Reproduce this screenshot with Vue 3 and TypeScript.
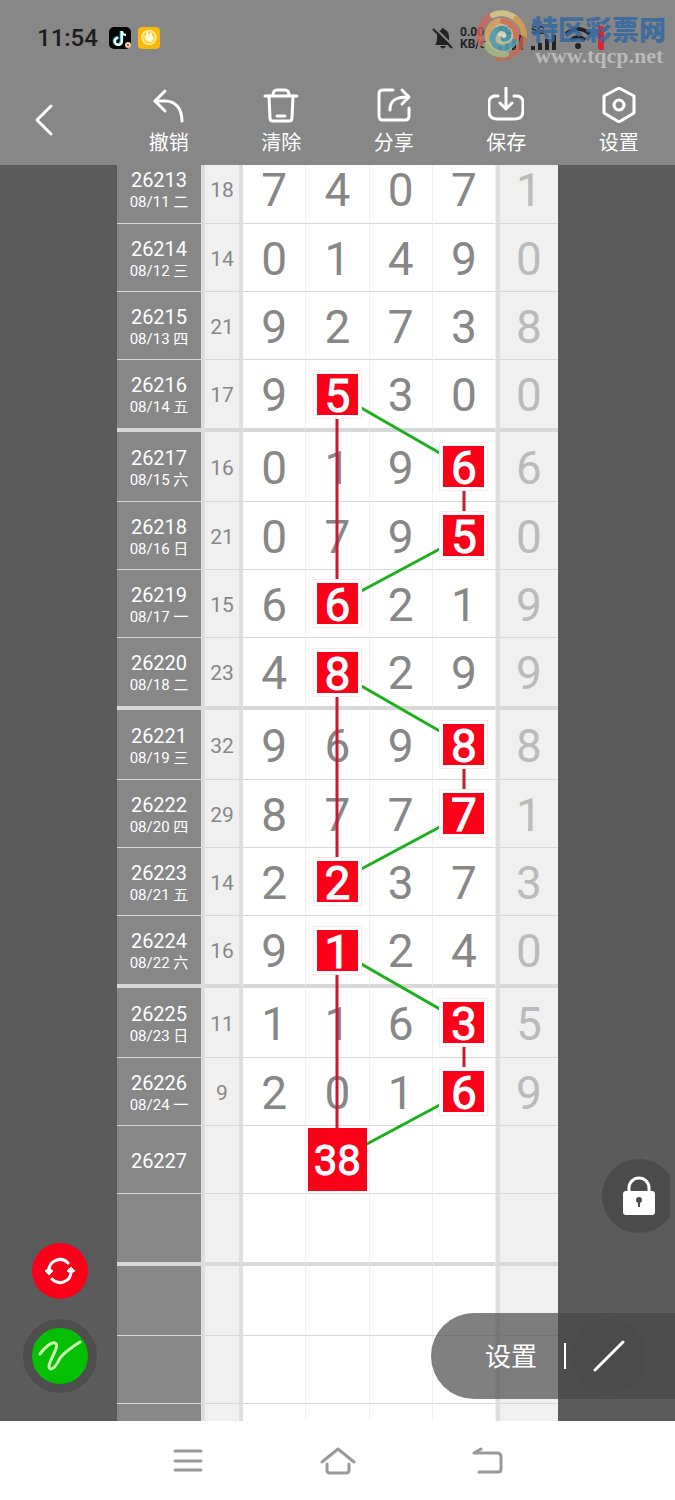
<script setup lang="ts">
interface Row {
  issue: string
  date: string
  sum: string
  digits: string[]
  tail: string
}

const BLOCK_HEIGHT = 278
const ROWS_PER_BLOCK = 4
const ROW_CENTERS = [35, 104, 172, 240]
const TOTAL_ROWS = 20
const CHART_HEIGHT = (TOTAL_ROWS / ROWS_PER_BLOCK) * BLOCK_HEIGHT

const source: [string, string, string, string, string][] = [
  ['26213', '08/11 二', '18', '7407', '1'],
  ['26214', '08/12 三', '14', '0149', '0'],
  ['26215', '08/13 四', '21', '9273', '8'],
  ['26216', '08/14 五', '17', '9530', '0'],
  ['26217', '08/15 六', '16', '0196', '6'],
  ['26218', '08/16 日', '21', '0795', '0'],
  ['26219', '08/17 一', '15', '6621', '9'],
  ['26220', '08/18 二', '23', '4829', '9'],
  ['26221', '08/19 三', '32', '9698', '8'],
  ['26222', '08/20 四', '29', '8777', '1'],
  ['26223', '08/21 五', '14', '2237', '3'],
  ['26224', '08/22 六', '16', '9124', '0'],
  ['26225', '08/23 日', '11', '1163', '5'],
  ['26226', '08/24 一', '9', '2016', '9'],
  ['26227', '', '', '', ''],
]

const rows: Row[] = Array.from({ length: TOTAL_ROWS }, (_, i) => {
  const [issue, date, sum, digits, tail] = source[i] ?? ['', '', '', '', '']
  return { issue, date, sum, digits: [0, 1, 2, 3].map((n) => digits[n] ?? ''), tail }
})
rows[14].digits[1] = '38'

const marked = new Set(['3-1', '4-3', '5-3', '6-1', '7-1', '8-3', '9-3', '10-1', '11-1', '12-3', '13-3'])
const isMarked = (r: number, c: number) => marked.has(`${r}-${c}`)

const columnX: Record<number, number> = { 1: 220, 3: 347 }
const rowY = (r: number) =>
  Math.floor(r / ROWS_PER_BLOCK) * BLOCK_HEIGHT + ROW_CENTERS[r % ROWS_PER_BLOCK]

const segments = [3, 7, 11].flatMap((r) => [
  { from: [r, 1], to: [r + 3, 1], kind: 'red' },
  { from: [r + 1, 3], to: [r + 2, 3], kind: 'red' },
  { from: [r, 1], to: [r + 1, 3], kind: 'green' },
  { from: [r + 2, 3], to: [r + 3, 1], kind: 'green' },
]).map((s) => ({
  kind: s.kind,
  x1: columnX[s.from[1]],
  y1: rowY(s.from[0]),
  x2: columnX[s.to[1]],
  y2: rowY(s.to[0]),
}))

const tools = [
  { label: '撤销', paths: ['M14 4 L4 14 L14 24', 'M4 14 H14 C25 14 31 22 31 34'] },
  { label: '清除', paths: ['M2 9 H34', 'M10 8 C10 4 12 3 14 3 H22 C24 3 26 4 26 8', 'M6 9 L7 31 Q7 34 10 34 H26 Q29 34 29 31 L30 9', 'M14 29 H22'] },
  { label: '分享', paths: ['M17 3 H7 Q3 3 3 7 V29 Q3 33 7 33 H29 Q33 33 33 29 V21', 'M14 23 C14 14 19 10 32 10', 'M26 3 L33 10 L26 17'] },
  { label: '保存', paths: ['M10 9 H7 Q1 10 1 15 V24 Q1 32 9 32 H27 Q35 32 35 24 V15 Q35 10 29 9 H26', 'M18 1 V21', 'M12 16 L18 22 L24 16'] },
  { label: '设置', paths: ['M18 1 L33 9 V26 L18 35 L3 26 V9 Z', 'M23 18 A5 5 0 1 1 13 18 A5 5 0 1 1 23 18'] },
]
</script>

<template>
  <div class="screen">
    <header class="top">
      <div class="status">
        <span class="time">11:54</span>
        <svg class="app-icon" viewBox="0 0 22 22" aria-hidden="true">
          <rect width="22" height="22" rx="5" fill="#050505" />
          <path d="M12 4 V14 A3.500 3.500 0 1 1 9 10.500" fill="none" stroke="#35e0e0" stroke-width="2.500" />
          <path d="M13 4 V14 A3.500 3.500 0 1 1 9.500 11 M13 5 Q14 8 17 8" fill="none" stroke="#fff" stroke-width="2.200" />
          <circle cx="19" cy="18" r="3" fill="#f4d3a0" /><circle cx="19" cy="18" r="1" fill="#a33" />
        </svg>
        <svg class="app-icon" viewBox="0 0 22 22" aria-hidden="true">
          <rect width="22" height="22" rx="4" fill="#f9b90c" />
          <circle cx="11" cy="10.500" r="7" fill="#fbd42b" stroke="#fff0a0" stroke-width="1.500" />
          <path d="M6 9 L8 9 L8 5 L10 5 L11 8 L13 5 L14 6 L14 9 L16 10 L15 13 Q12 17 8 13 Z" fill="#fff8e0" />
        </svg>
        <div class="signals">
          <svg class="bell" viewBox="0 0 22 24" aria-hidden="true">
            <path d="M3 19 Q5 17 5 11 Q5 5 9 4 Q11 0 13 4 Q17 5 17 11 Q17 17 19 19 Z M8 20 H14 Q11 25 8 20 Z" fill="#222" />
            <path d="M3 2 L22 21" stroke="#878787" stroke-width="2" /><path d="M1 3 L20 22" stroke="#222" stroke-width="2" />
          </svg>
          <span class="speed">0.00<br />KB/s</span>
          <span class="cell-net">5G<svg viewBox="0 0 26 15" aria-hidden="true"><path d="M2 15 V11 M9 15 V8 M16 15 V4 M23 15 V0" /></svg></span>
          <span class="cell-net">5G<svg viewBox="0 0 26 15" aria-hidden="true"><path d="M2 15 V11 M9 15 V8 M16 15 V4 M23 15 V0" /></svg></span>
          <svg class="wifi" viewBox="0 0 28 24" aria-hidden="true">
            <path d="M2 8 Q14 -2 26 8 M7 14 Q14 8 21 14" fill="none" stroke="#222" stroke-width="4" /><circle cx="14" cy="20" r="3" fill="#222" />
          </svg>
          <i class="battery"></i>
        </div>
        <div class="watermark">
          <svg viewBox="0 0 52 52" aria-hidden="true">
            <circle cx="26" cy="26" r="17" fill="#d9cf9c" opacity=".85" />
            <g fill="none" stroke-width="6" stroke-linecap="round" opacity=".9">
              <path d="M5 34 A23 23 0 0 1 16 6" stroke="#d76458" />
              <path d="M17 6 A22 22 0 0 1 43 13" stroke="#e4d28a" />
              <path d="M40 10 A22 22 0 0 1 48 27" stroke="#e5a34a" />
              <path d="M47 30 A23 23 0 0 1 22 49" stroke="#cc6b50" />
              <path d="M10 36 A18 18 0 0 0 30 45" stroke="#a9bf82" />
              <path d="M12 30 A16 16 0 0 1 23 12" stroke="#dfa258" />
              <path d="M27 12 A15 15 0 0 1 40 30" stroke="#dc6a4e" />
              <path d="M38 33 Q30 43 19 36 Q13 28 21 21" stroke="#4b9fb8" />
              <path d="M21 21 Q29 16 33 25 Q33 31 27 30" stroke="#3797b5" stroke-width="5" />
              <path d="M24 25 Q27 23 28 27" stroke="#e8eee8" stroke-width="4" />
            </g>
          </svg>
          <div class="mark-text"><strong>特区彩票网</strong><span>www.tqcp.net</span></div>
        </div>
      </div>
      <nav class="toolbar">
        <button class="tool back" type="button" aria-label="返回">
          <svg viewBox="0 0 20 34" aria-hidden="true"><path d="M17 3 L3 17 L17 31" /></svg>
        </button>
        <button v-for="tool in tools" :key="tool.label" class="tool" type="button">
          <svg viewBox="0 0 36 36" aria-hidden="true"><path v-for="d in tool.paths" :key="d" :d="d" /></svg>
          <span>{{ tool.label }}</span>
        </button>
      </nav>
    </header>

    <main class="stage">
      <div class="chart">
        <table>
          <colgroup><col class="c-issue" /><col class="c-sum" /><col span="4" /><col class="c-tail" /></colgroup>
          <tbody>
            <tr v-for="(row, r) in rows" :key="r" :class="{ first: r % 4 === 0, last: r % 4 === 3 }">
              <th scope="row" class="issue">
                <span class="no">{{ row.issue }}</span><span v-if="row.date" class="date">{{ row.date }}</span>
              </th>
              <td class="sum">{{ row.sum }}</td>
              <td v-for="(d, c) in row.digits" :key="c" class="digit">
                <span v-if="d === '38'" class="pick">{{ d }}</span>
                <span v-else-if="isMarked(r, c)" class="hit">{{ d }}</span>
                <span v-else class="plain">{{ d }}</span>
              </td>
              <td class="tail"><span class="plain">{{ row.tail }}</span></td>
            </tr>
          </tbody>
        </table>
        <svg class="trend" :viewBox="`0 0 441 ${CHART_HEIGHT}`" preserveAspectRatio="none" aria-hidden="true">
          <line v-for="(s, i) in segments" :key="i" :class="s.kind" :x1="s.x1" :y1="s.y1" :x2="s.x2" :y2="s.y2" />
        </svg>
      </div>

      <div class="left-actions">
        <button class="refresh" type="button" aria-label="刷新">
          <svg viewBox="0 0 32 28" aria-hidden="true">
            <path d="M5 14 A11 11 0 0 1 24 6 M27 14 A11 11 0 0 1 8 22" fill="none" stroke="#fff" stroke-width="3" stroke-linecap="round" />
            <path d="M1 14 L5 11 L9 14 L5 18 Z M23 14 L27 10 L31 14 L27 16 Z" fill="#fff" stroke="#fff" stroke-width="1" stroke-linejoin="round" />
          </svg>
        </button>
        <button class="draw" type="button" aria-label="画线">
          <svg viewBox="0 0 44 32" aria-hidden="true">
            <path d="M2 14 C8 6 14 2 17 3 C23 5 10 22 11 27 C12 31 17 29 22 18 C26 13 34 7 42 2" />
          </svg>
        </button>
      </div>

      <button class="lock" type="button" aria-label="锁定">
        <svg viewBox="0 0 34 40" aria-hidden="true">
          <path d="M7 17 V12 A10 10 0 0 1 27 12 V17" fill="none" stroke="#fff" stroke-width="3" />
          <rect x="1" y="15" width="32" height="24" rx="3" fill="#fff" />
          <path d="M17 25 V31" stroke="#4b4b4b" stroke-width="2" /><circle cx="17" cy="24" r="3" fill="#4b4b4b" />
        </svg>
      </button>

      <div class="pill">
        <button type="button" class="pill-set">设置</button>
        <i class="divider"></i>
        <button type="button" class="pill-line" aria-label="直线">
          <svg viewBox="0 0 32 32" aria-hidden="true"><path d="M2 30 L30 2" /></svg>
        </button>
      </div>
    </main>

    <nav class="system">
      <button type="button" aria-label="最近任务"><svg viewBox="0 0 36 28"><path d="M5 4 H31 M5 14 H31 M5 23 H31" /></svg></button>
      <button type="button" aria-label="主页"><svg viewBox="0 0 36 28"><path d="M2 15 L18 2 L34 15 M7 17 V23 Q7 26 10 26 H26 Q29 26 29 23 V17" /></svg></button>
      <button type="button" aria-label="后退"><svg viewBox="0 0 36 28"><path d="M11 2 L4 6 H27 Q31 6 31 10 V22 Q31 25 28 25 H9" /></svg></button>
    </nav>
  </div>
</template>

<style>
body {
  background: #fff;
}
</style>

<style scoped>
.screen {
  display: flex;
  flex-direction: column;
  height: 100vh;
  overflow: hidden;
  font-family: Roboto, "Noto Sans CJK SC", sans-serif;
}
button {
  padding: 0;
  border: 0;
  background: none;
  color: #fff;
  font-family: inherit;
}
svg {
  display: block;
}
.top {
  flex: none;
  background: #878787;
}
.status {
  position: relative;
  display: flex;
  align-items: center;
  height: 76px;
  padding: 0 71px 0 37px;
}
.time {
  margin-right: 11px;
  color: #1c1c1c;
  font-size: 24px;
  font-weight: 500;
}
.app-icon {
  width: 22px;
  height: 22px;
  margin-right: 7px;
}
.signals {
  display: flex;
  align-items: center;
  gap: 6px;
  margin-left: auto;
  color: #222;
}
.bell {
  width: 22px;
  height: 24px;
}
.speed {
  width: 32px;
  font-size: 12px;
  font-weight: 700;
  line-height: 12px;
}
.cell-net {
  width: 27px;
  font-size: 11px;
  font-weight: 700;
  line-height: 9px;
}
.cell-net svg {
  width: 26px;
  height: 15px;
  stroke: #222;
  stroke-width: 4;
}
.wifi {
  width: 28px;
  height: 24px;
}
.battery {
  width: 6px;
  height: 24px;
  border-radius: 2px;
  background: #d92632;
}
.watermark {
  position: absolute;
  top: 9px;
  right: 9px;
  display: flex;
  align-items: flex-start;
  opacity: 0.85;
}
.watermark svg {
  width: 52px;
  height: 52px;
  margin-right: 3px;
}
.mark-text {
  display: flex;
  flex-direction: column;
  padding-top: 7px;
}
.mark-text strong {
  color: #34699f;
  font-size: 27px;
  font-weight: 900;
  line-height: 30px;
}
.mark-text span {
  padding-left: 4px;
  color: #c4c4c4;
  font: bold 22px/20px "Liberation Serif", serif;
}
.toolbar {
  display: grid;
  grid-template-columns: repeat(6, 1fr);
  height: 89px;
}
.tool {
  display: flex;
  flex-direction: column;
  align-items: center;
  padding-top: 11px;
  font-size: 20px;
  line-height: 26px;
}
.tool svg {
  width: 36px;
  height: 36px;
  margin-bottom: 7px;
  fill: none;
  stroke: #fff;
  stroke-width: 3;
  stroke-linecap: round;
  stroke-linejoin: round;
}
.tool.back {
  align-items: flex-start;
  padding: 27px 0 0 34px;
}
.tool.back svg {
  width: 20px;
  height: 34px;
}
.stage {
  position: relative;
  flex: 1;
  min-height: 0;
  padding: 0 117px;
  overflow: hidden;
  background: #5b5b5b;
}
.chart {
  position: relative;
  margin-top: -11px;
}
table {
  width: 100%;
  border-spacing: 0;
  table-layout: fixed;
}
.c-issue {
  width: 88px;
}
.c-sum {
  width: 38px;
}
.c-tail {
  width: 62px;
}
tr {
  height: 68px;
}
tr.first {
  height: 70px;
}
tr.last {
  height: 72px;
}
th,
td {
  box-sizing: border-box;
  padding: 0;
  border-bottom: 1px solid #d8d8d8;
  text-align: center;
  vertical-align: middle;
}
tr.last > * {
  border-bottom-width: 4px;
}
.issue {
  padding-top: 2px;
  border-right: 4px solid #dedede;
  background: #878787;
  color: #fff;
  font-weight: 400;
}
.no,
.date {
  display: block;
}
.no {
  font-size: 20px;
  line-height: 24px;
}
.date {
  font-size: 15px;
  line-height: 20px;
}
.sum {
  padding-top: 2px;
  border-right: 4px solid #dedede;
  background: #f0f0f0;
  color: #878787;
  font-size: 21px;
}
.digit {
  border-right: 1px solid #efefef;
  background: #fff;
  color: #878787;
}
.tail {
  border-left: 4px solid #dedede;
  background: #f0f0f0;
  color: #bbb;
}
.plain,
.hit,
.pick {
  display: block;
  font-size: 46px;
  line-height: 41px;
}
.plain {
  padding-top: 3px;
}
.hit,
.pick {
  position: relative;
  z-index: 2;
  width: 41px;
  height: 41px;
  margin: 0 auto;
  background: #fd0019;
  color: #fff;
  line-height: 45px;
  -webkit-text-stroke: 1px #fff;
  box-shadow: 0 0 0 3px #fff, 0 0 0 4px #fbe9eb;
}
.pick {
  width: 59px;
  height: 63px;
  font-size: 42px;
  line-height: 66px;
  box-shadow: none;
}
.trend {
  position: absolute;
  inset: 0;
  z-index: 1;
  width: 100%;
  height: 100%;
  stroke-width: 3;
}
.red {
  stroke: #cb1730;
}
.green {
  stroke: #1cb01c;
}
.left-actions {
  position: absolute;
  bottom: 28px;
  left: 23px;
  display: flex;
  flex-direction: column;
  align-items: center;
  gap: 20px;
}
.refresh,
.draw {
  display: grid;
  place-items: center;
  width: 56px;
  height: 56px;
  border-radius: 50%;
  background: #fd0019;
}
.refresh svg {
  width: 32px;
  height: 28px;
}
.draw {
  box-sizing: border-box;
  width: 74px;
  height: 74px;
  border: 9px solid #4e4e4e;
  background: #05bf05;
}
.draw svg {
  width: 44px;
  height: 32px;
  fill: none;
  stroke: #c8ffb0;
  stroke-width: 3;
  stroke-linecap: round;
}
.lock {
  position: absolute;
  right: -1px;
  bottom: 188px;
  display: grid;
  place-items: center;
  width: 74px;
  height: 74px;
  border-radius: 50%;
  background: #4b4b4b;
  clip-path: inset(0 6px 0 0);
}
.lock svg {
  width: 34px;
  height: 40px;
}
.pill {
  position: absolute;
  right: 0;
  bottom: 22px;
  z-index: 3;
  display: flex;
  align-items: center;
  box-sizing: border-box;
  height: 86px;
  padding: 0 29px 0 54px;
  border-radius: 43px 0 0 43px;
  background: rgba(71, 71, 71, 0.69);
}
.pill-set {
  padding-top: 2px;
  font-size: 26px;
  line-height: 36px;
}
.divider {
  width: 2px;
  height: 26px;
  margin: 0 6px 0 27px;
  background: #fff;
}
.pill-line {
  display: grid;
  place-items: center;
  width: 74px;
  height: 74px;
  border-radius: 50%;
  background: rgba(71, 71, 71, 0.2);
}
.pill-line svg {
  width: 32px;
  height: 32px;
  stroke: #fff;
  stroke-width: 3;
  stroke-linecap: round;
}
.system {
  display: flex;
  flex: none;
  align-items: center;
  justify-content: center;
  gap: 114px;
  height: 79px;
  background: #fff;
}
.system svg {
  width: 36px;
  height: 28px;
  fill: none;
  stroke: #999;
  stroke-width: 3;
  stroke-linecap: round;
  stroke-linejoin: round;
}
</style>
